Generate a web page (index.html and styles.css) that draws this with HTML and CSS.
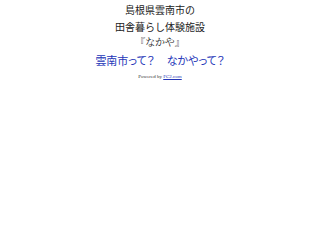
FILE: index.html
```html
<!DOCTYPE html>
<html lang="ja">
<head>
<meta charset="utf-8">
<title>なかや</title>
<link rel="stylesheet" href="styles.css">
</head>
<body>
<div class="page">
  <p class="line l1">島根県雲南市の</p>
  <p class="line l2">田舎暮らし体験施設</p>
  <p class="line l3">『なかや』</p>
  <p class="links"><a href="#">雲南市って？</a><a href="#">なかやって？</a></p>
  <p class="powered">Powered by <a href="#">FC2.com</a></p>
</div>
</body>
</html>
```

FILE: styles.css
```css
html, body {
  margin: 0;
  padding: 0;
  background: #ffffff;
}
.page {
  display: flex;
  flex-direction: column;
  align-items: center;
  padding-top: 1px;
  font-family: "Noto Sans CJK JP", sans-serif;
  color: #222222;
}
.line {
  margin: 0;
  font-size: 10px;
  line-height: 17px;
}
.l3 {
  line-height: 14px;
  font-family: "Noto Serif CJK JP", "Noto Sans CJK JP", serif;
  font-feature-settings: "palt";
}
.links {
  margin: 3px 0 0;
  display: flex;
  gap: 12px;
  font-size: 11px;
  line-height: 16px;
}
.links a {
  color: #2536b8;
  text-decoration: none;
  font-feature-settings: "palt";
}
.powered {
  margin: 5px 0 0;
  font-family: "Liberation Serif", serif;
  font-size: 5px;
  line-height: 8px;
  color: #333333;
}
.powered a {
  color: #2536b8;
  text-decoration: underline;
}
```
